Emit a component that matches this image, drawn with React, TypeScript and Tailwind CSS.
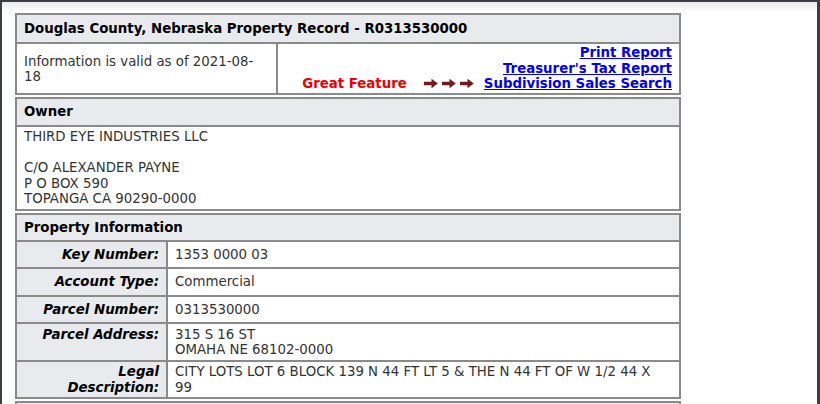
import React from "react";

const Row = ({
  label,
  children,
  h,
  last,
  top,
}: {
  label: React.ReactNode;
  children: React.ReactNode;
  h: string;
  last?: boolean;
  top?: boolean;
}) => (
  <div className={`flex ${h} ${last ? "" : "border-b-2 border-[#8a8a8a]"}`}>
    <div
      className={`w-[151px] shrink-0 border-r-2 border-[#8a8a8a] bg-[#e9eaee] px-[7px] flex justify-end text-right font-bold italic text-black ${
        top ? "items-start pt-[2.5px]" : "items-center"
      }`}
    >
      <div>{label}</div>
    </div>
    <div className="flex-1 px-[7px] flex items-center text-[#333]">
      <div>{children}</div>
    </div>
  </div>
);

const Arrow = () => (
  <svg width="14" height="11" viewBox="0 0 14 11" className="block">
    <path d="M0 3.8 H7.5 V0.8 L13.8 5.5 L7.5 10.2 V7.2 H0 Z" fill="#6e1c1c" />
  </svg>
);

export default function App() {
  return (
    <div className="w-[820px] h-[404px] overflow-hidden bg-[#3b3e42] pl-[2px] pt-[2px] pr-[3px] font-['DejaVu_Sans',sans-serif] text-[13.333px] leading-[15.5px]">
      <div className="h-[402px] bg-[linear-gradient(to_bottom,#e9e9e9_0px,#ffffff_10px)] pl-[13px] pt-[11px]">
        <div className="w-[666px] flex flex-col gap-[2px]">
          {/* Section 1 */}
          <div className="border-2 border-[#8a8a8a]">
            <div className="h-[29px] bg-[#e9eaee] border-b-2 border-[#8a8a8a] px-[7px] flex items-center font-bold text-black">
              Douglas County, Nebraska Property Record - R0313530000
            </div>
            <div className="flex h-[49px]">
              <div className="w-[261px] shrink-0 border-r-2 border-[#8a8a8a] px-[7px] flex items-center text-[#333] leading-[15px]">
                <div>
                  Information is valid as of 2021-08-
                  <br />
                  18
                </div>
              </div>
              <div className="flex-1 px-[7px] flex items-center justify-end text-right font-bold">
                <div>
                  <a href="#" className="text-[#0000ee] underline">
                    Print Report
                  </a>
                  <br />
                  <a href="#" className="text-[#0000ee] underline">
                    Treasurer's Tax Report
                  </a>
                  <br />
                  <span className="text-[#ee0000]">Great Feature</span>
                  <span className="inline-flex gap-[4px] ml-[17px] mr-[10px] align-[-1px]">
                    <Arrow />
                    <Arrow />
                    <Arrow />
                  </span>
                  <a href="#" className="text-[#0000ee] underline">
                    Subdivision Sales Search
                  </a>
                </div>
              </div>
            </div>
          </div>

          {/* Owner */}
          <div className="border-2 border-[#8a8a8a]">
            <div className="h-[28px] bg-[#e9eaee] border-b-2 border-[#8a8a8a] px-[7px] flex items-center font-bold text-black">
              Owner
            </div>
            <div className="h-[82px] px-[7px] pt-[2px] text-[#333]">
              THIRD EYE INDUSTRIES LLC
              <br />
              <br />
              C/O ALEXANDER PAYNE
              <br />
              P O BOX 590
              <br />
              TOPANGA CA 90290-0000
            </div>
          </div>

          {/* Property Information */}
          <div className="border-2 border-[#8a8a8a]">
            <div className="h-[27px] bg-[#e9eaee] border-b-2 border-[#8a8a8a] px-[7px] flex items-center font-bold text-black">
              Property Information
            </div>
            <Row label="Key Number:" h="h-[27px]">
              1353 0000 03
            </Row>
            <Row label="Account Type:" h="h-[28px]">
              Commercial
            </Row>
            <Row label="Parcel Number:" h="h-[27px]">
              0313530000
            </Row>
            <Row label="Parcel Address:" h="h-[38px]" top>
              315 S 16 ST
              <br />
              OMAHA NE 68102-0000
            </Row>
            <Row
              label={
                <>
                  Legal
                  <br />
                  Description:
                </>
              }
              h="h-[35px]"
              last
            >
              CITY LOTS LOT 6 BLOCK 139 N 44 FT LT 5 &amp; THE N 44 FT OF W 1/2 44 X
              <br />
              99
            </Row>
          </div>

          {/* Next section (clipped below the window) */}
          <div className="border-2 border-[#8a8a8a]">
            <div className="h-[28px] bg-[#e9eaee] border-b-2 border-[#8a8a8a]" />
            <div className="h-[40px]" />
          </div>
        </div>
      </div>
    </div>
  );
}
